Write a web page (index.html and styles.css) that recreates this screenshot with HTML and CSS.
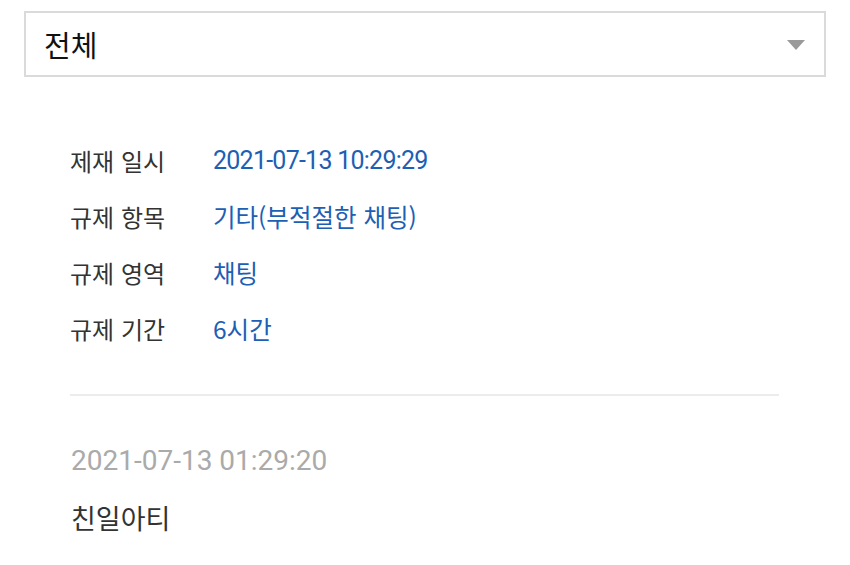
FILE: index.html
```html
<!DOCTYPE html>
<html lang="ko">
<head>
  <meta charset="UTF-8">
  <title>제재 내역</title>
  <meta name="viewport" content="width=device-width, initial-scale=1">
  <link rel="stylesheet" href="styles.css">
</head>
<body>
  <div class="filter">
    <span class="filter-label">전체</span>
    <svg class="filter-arrow" width="18" height="10" viewBox="0 0 18 10"><path d="M0 0H18L9 10Z" fill="#9a9a9a"/></svg>
  </div>

  <div class="detail">
    <dl class="info">
      <div class="row"><dt>제재 일시</dt><dd class="num">2021-07-13 10:29:29</dd></div>
      <div class="row"><dt>규제 항목</dt><dd>기타(부적절한 채팅)</dd></div>
      <div class="row"><dt>규제 영역</dt><dd>채팅</dd></div>
      <div class="row"><dt>규제 기간</dt><dd>6시간</dd></div>
    </dl>

    <div class="log">
      <div class="log-date">2021-07-13 01:29:20</div>
      <div class="log-msg">친일아티</div>
    </div>
  </div>
</body>
</html>
```

FILE: styles.css
```css
body {
  margin: 0;
  background: #fff;
  font-family: Roboto, "Noto Sans CJK KR", sans-serif;
  color: #333;
}
.filter {
  margin: 11px 24px 0;
  height: 62px;
  border: 2px solid #dadada;
  display: flex;
  align-items: center;
  justify-content: space-between;
  padding: 0 19px 0 18px;
}
.filter-label {
  font-family: "Noto Sans CJK KR", sans-serif;
  font-size: 29px;
  color: #111;
}
.filter-arrow {
  margin-top: 2px;
}
.detail {
  margin: 0 71px 0 70px;
}
.info {
  margin: 0;
  padding: 55px 0 38px;
  border-bottom: 2px solid #ececec;
}
.row {
  display: flex;
  align-items: center;
  height: 56px;
}
.row dt {
  width: 143px;
  font-family: "Noto Sans CJK KR", sans-serif;
  font-size: 24px;
  color: #333;
}
.row dd {
  margin: 0;
  font-family: "Noto Sans CJK KR", sans-serif;
  font-size: 24.5px;
  color: #1c5fb5;
}
.row dd.num {
  font-family: Roboto, sans-serif;
  font-size: 25px;
  letter-spacing: -0.75px;
}
.log {
  padding-top: 48px;
  padding-left: 1px;
}
.log-date {
  font-size: 28px;
  color: #aaa;
  height: 54px;
}
.log-msg {
  font-family: "Noto Sans CJK KR", sans-serif;
  font-size: 27px;
  color: #333;
}
```
